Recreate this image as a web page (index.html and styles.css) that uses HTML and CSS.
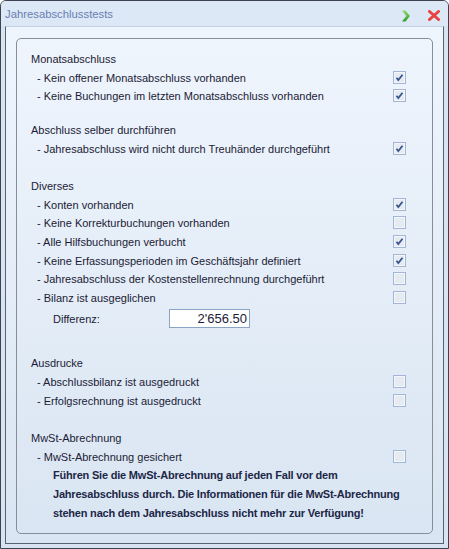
FILE: index.html
```html
<!DOCTYPE html>
<html>
<head>
    <title>Jahresabschlusstests</title>
    <link rel="stylesheet" href="styles.css">
</head>
<body>
    <div class="window">
        <div class="titlebar">
            <span class="title">Jahresabschlusstests</span>
            <span class="title-buttons">
                <svg class="btn-next" width="10" height="12" viewBox="0 0 10 12">
                    <defs>
                        <linearGradient id="gr" x1="0" y1="0" x2="0" y2="1">
                            <stop offset="0" stop-color="#8fdc6a"/>
                            <stop offset="1" stop-color="#2f9a2c"/>
                        </linearGradient>
                    </defs>
                    <path d="M1 0.5 L4.5 0.5 L9 6 L4.5 11.5 L1 11.5 L5.3 6 Z" fill="url(#gr)"/>
                </svg>
                <svg class="btn-close" width="12" height="11" viewBox="0 0 12 11">
                    <path d="M1.5 1.5 L10.5 9.5 M10.5 1.5 L1.5 9.5" stroke="#e8413f" stroke-width="3" stroke-linecap="round"/>
                </svg>
            </span>
        </div>
        <div class="client">
            <div class="group">
                <div class="section">
                    <div class="row heading">Monatsabschluss</div>
                    <div class="row item"><span>- Kein offener Monatsabschluss vorhanden</span><span class="check"><svg viewBox="0 0 11 11"><path d="M2.5 5.8 L4.3 8 L8.5 2.8"/></svg></span></div>
                    <div class="row item"><span>- Keine Buchungen im letzten Monatsabschluss vorhanden</span><span class="check"><svg viewBox="0 0 11 11"><path d="M2.5 5.8 L4.3 8 L8.5 2.8"/></svg></span></div>
                </div>

                <div class="section gap-1">
                    <div class="row heading">Abschluss selber durchführen</div>
                    <div class="row item"><span>- Jahresabschluss wird nicht durch Treuhänder durchgeführt</span><span class="check"><svg viewBox="0 0 11 11"><path d="M2.5 5.8 L4.3 8 L8.5 2.8"/></svg></span></div>
                </div>

                <div class="section gap-2">
                    <div class="row heading">Diverses</div>
                    <div class="row item"><span>- Konten vorhanden</span><span class="check"><svg viewBox="0 0 11 11"><path d="M2.5 5.8 L4.3 8 L8.5 2.8"/></svg></span></div>
                    <div class="row item"><span>- Keine Korrekturbuchungen vorhanden</span><span class="check"></span></div>
                    <div class="row item"><span>- Alle Hilfsbuchungen verbucht</span><span class="check"><svg viewBox="0 0 11 11"><path d="M2.5 5.8 L4.3 8 L8.5 2.8"/></svg></span></div>
                    <div class="row item"><span>- Keine Erfassungsperioden im Geschäftsjahr definiert</span><span class="check"><svg viewBox="0 0 11 11"><path d="M2.5 5.8 L4.3 8 L8.5 2.8"/></svg></span></div>
                    <div class="row item"><span>- Jahresabschluss der Kostenstellenrechnung durchgeführt</span><span class="check"></span></div>
                    <div class="row item"><span>- Bilanz ist ausgeglichen</span><span class="check"></span></div>
                    <div class="row diff">
                        <span class="diff-label">Differenz:</span>
                        <input class="diff-value" type="text" value="2'656.50" readonly>
                    </div>
                </div>

                <div class="section gap-3">
                    <div class="row heading">Ausdrucke</div>
                    <div class="row item"><span>- Abschlussbilanz ist ausgedruckt</span><span class="check"></span></div>
                    <div class="row item"><span>- Erfolgsrechnung ist ausgedruckt</span><span class="check"></span></div>
                </div>

                <div class="section gap-2">
                    <div class="row heading">MwSt-Abrechnung</div>
                    <div class="row item"><span>- MwSt-Abrechnung gesichert</span><span class="check"></span></div>
                    <div class="note">
                        Führen Sie die MwSt-Abrechnung auf jeden Fall vor dem<br>
                        Jahresabschluss durch. Die Informationen für die MwSt-Abrechnung<br>
                        stehen nach dem Jahresabschluss nicht mehr zur Verfügung!
                    </div>
                </div>
            </div>
        </div>
    </div>
</body>
</html>
```

FILE: styles.css
```css
body {
    margin: 0;
    font-family: "Liberation Sans", Arial, sans-serif;
    font-size: 11px;
    color: #1b1b35;
}
.window {
    box-sizing: border-box;
    width: 449px;
    height: 549px;
    border: 1px solid #3d4450;
    border-radius: 6px 6px 0 0;
    background: #d8e4f2;
    padding: 0 4px 4px 4px;
    display: flex;
    flex-direction: column;
}
.titlebar {
    height: 25px;
    display: flex;
    align-items: center;
    justify-content: space-between;
    background: #dce8f5;
    margin: 0 -4px;
    padding: 0 8px 0 4px;
    border-radius: 5px 5px 0 0;
}
.title {
    color: #6a7eb4;
    font-size: 11.3px;
    margin-top: 1px;
}
.title-buttons {
    display: flex;
    align-items: center;
    gap: 17px;
    margin-top: 4px;
}
.btn-next, .btn-close {
    display: block;
}
.client {
    flex: 1;
    display: flex;
    flex-direction: column;
    border: 1px solid #59626f;
    border-top-color: #c3d2e6;
    background: linear-gradient(#eff5fd, #d9e5f2);
}
.group {
    flex: 1;
    margin: 11px 10px 9px 10px;
    border: 1px solid #888e98;
    border-radius: 5px;
    padding: 11px 26px 0 14px;
}
.row {
    height: 18.6px;
    display: flex;
    align-items: center;
    justify-content: space-between;
}
.item {
    padding-left: 6px;
}
.gap-1 {
    margin-top: 15px;
}
.gap-2 {
    margin-top: 19px;
}
.gap-3 {
    margin-top: 26px;
}
.check {
    box-sizing: border-box;
    width: 13px;
    height: 13px;
    border: 1px solid #a3b6d6;
    background: #e6ebf2;
    box-shadow: inset 0 0 0 1px #f4f6fa;
    margin-top: -1px;
    display: flex;
}
.check svg {
    width: 11px;
    height: 11px;
}
.check path {
    fill: none;
    stroke: #37558e;
    stroke-width: 1.8;
}
.diff {
    margin-top: 2.4px;
    padding-left: 22px;
    justify-content: flex-start;
}
.diff-label {
    width: 116px;
}
.diff-value {
    box-sizing: border-box;
    width: 81px;
    height: 19px;
    margin: 0;
    border: 1px solid #8aa3c6;
    padding: 0 2px 0 0;
    text-align: right;
    font-family: "Liberation Sans", Arial, sans-serif;
    font-size: 13px;
    color: #1b1b35;
    background: #fff;
    outline: none;
}
.note {
    padding-left: 22px;
    font-weight: bold;
    letter-spacing: -0.2px;
    line-height: 19px;
    color: #1c2747;
}
```
